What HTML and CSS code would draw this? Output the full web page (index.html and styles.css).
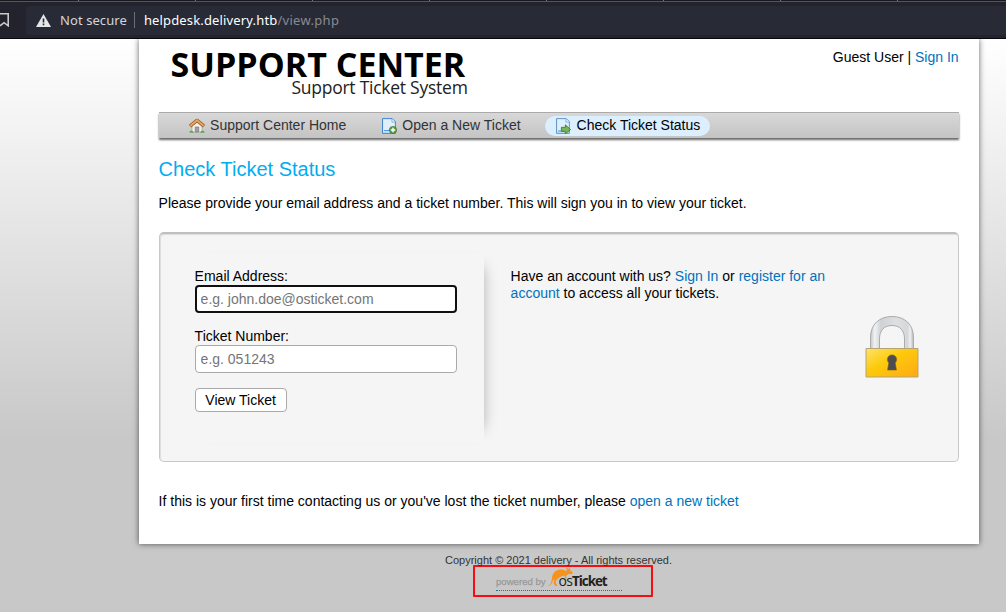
FILE: index.html
```html
<!DOCTYPE html>
<html lang="en">
<head>
<meta charset="utf-8">
<title>Support Center</title>
<link rel="stylesheet" href="styles.css">
</head>
<body>
<div class="browser">
  <div class="tabs"><i></i><i></i><i></i><i></i><i></i><i></i><i></i><i></i></div>
  <div class="toolbar">
    <svg class="bookmark" width="12" height="14" viewBox="0 0 12 14"><path d="M0 .8H8.2V12.8L4.1 9.700 0 12.8" fill="none" stroke="#c9cacd" stroke-width="1.6"/></svg>
    <div class="address">
      <svg class="warn" width="15" height="13" viewBox="0 0 15 13"><path d="M7.5 0 15 13H0Z" fill="#e6e7e9"/><path d="M6.7 4.5h1.6v4H6.7zM6.7 9.6h1.6v1.6H6.7z" fill="#282a36"/></svg>
      <span class="secure">Not secure</span>
      <span class="host">helpdesk.delivery.htb</span><span class="path">/view.php</span>
    </div>
  </div>
</div>
<div class="page">
  <main class="container">
    <header class="header">
      <div class="logo"><div class="logo-title">SUPPORT CENTER</div><div class="logo-sub">Support Ticket System</div></div>
      <div class="user">Guest User | <a>Sign In</a></div>
    </header>
    <nav class="nav">
      <a class="nav-item home">
        <svg width="16" height="16" viewBox="0 0 16 16"><path d="M3 8 8 3.5 13 8v6H3Z" fill="#f1efeb" stroke="#aaa49b" stroke-width=".7"/><path d="M6.3 9h3.4v5H6.3Z" fill="#a1a1a1" stroke="#777" stroke-width=".7"/><path d="M1 8.2 8 2.4l7 5.8" fill="none" stroke="#9b5822" stroke-width="3.4" stroke-linejoin="round"/><path d="M1.2 7.900 8 2.300l6.8 5.600" fill="none" stroke="#e3a763" stroke-width="2"/><path d="M.4 14.8c0-2.5 2-3 3.2-1.8l1.5 1.8ZM11 14.8l1.2-1.8c1.3-1.2 3.4-.7 3.4 1.8Z" fill="#5caa58"/></svg>
        Support Center Home</a>
      <a class="nav-item new">
        <svg width="16" height="16" viewBox="0 0 16 16"><path d="M1.5.6h9.8l3.1 3.1v11.7H1.5Z" fill="#c6e1fa" stroke="#4685c8"/><path d="M2.5 1.6h8v3h3v5L2.5 13Z" fill="#e0effc"/><path d="M11 1v3h3" fill="#fff" stroke="#76a6d6" stroke-width=".8"/><path d="M3 12.5h7" stroke="#4b9be8"/><circle cx="12" cy="12" r="3.6" fill="#62a047" stroke="#397026" stroke-width=".7"/><path d="M12 9.8v4.4M9.8 12h4.4" stroke="#fff" stroke-width="1.4"/></svg>
        Open a New Ticket</a>
      <a class="nav-item status">
        <svg width="16" height="16" viewBox="0 0 16 16"><path d="M1.5.6h9.8l3.1 3.1v11.7H1.5Z" fill="#c6e1fa" stroke="#6a98c8"/><path d="M2.5 1.6h8v3h3v5L2.5 13Z" fill="#e0effc"/><path d="M11 1v3h3" fill="#fff" stroke="#76a6d6" stroke-width=".8"/><path d="M3 13h5" stroke="#4b9be8"/><path d="M6.4 9.3h4V6.8l5.2 4.8-5.2 4.2v-2.4h-4Z" fill="#77b656" stroke="#3f7f2c" stroke-width=".9"/></svg>
        Check Ticket Status</a>
    </nav>
    <h1 class="title">Check Ticket Status</h1>
    <p class="intro">Please provide your email address and a ticket number. This will sign you in to view your ticket.</p>
    <form class="panel">
      <div class="login">
        <label for="email">Email Address:</label>
        <input id="email" class="focused" type="text" placeholder="e.g. john.doe@osticket.com">
        <label class="second" for="number">Ticket Number:</label>
        <input id="number" type="text" placeholder="e.g. 051243">
        <button type="button">View Ticket</button>
      </div>
      <div class="account">
        <p>Have an account with us? <a>Sign In</a> or <a>register for an account</a> to access all your tickets.</p>
        <svg class="lock" width="56" height="64" viewBox="0 0 56 64">
          <defs>
            <linearGradient id="gold" x1="0" y1="0" x2="1" y2="1"><stop offset="0" stop-color="#ffe268"/><stop offset=".42" stop-color="#fdca0b"/><stop offset="1" stop-color="#ffa915"/></linearGradient>
            <linearGradient id="steel" x1="0" y1="0" x2="1" y2="0"><stop offset="0" stop-color="#c4c6c8"/><stop offset=".1" stop-color="#f1f2f3"/><stop offset=".24" stop-color="#cfd1d3"/><stop offset=".6" stop-color="#dddfe0"/><stop offset=".87" stop-color="#d5d7d9"/><stop offset=".92" stop-color="#f0f1f2"/><stop offset="1" stop-color="#b5b7b9"/></linearGradient>
          </defs>
          <path d="M6.5 34V23C6.500 9 15.500 1.500 28 1.500S49.500 9 49.500 23V34H40.500V24C40.500 15.500 36 10.500 28 10.500S15.500 15.500 15.500 24V34Z" fill="url(#steel)" stroke="#a9abad"/>
          <path d="M2 33.500H54V62H2Z" fill="url(#gold)" stroke="#b5a574"/>
          <path d="M24.800 47.800a4.600 4.600 0 1 1 6.400 0L32.400 55H23.600Z" fill="#4d4c50" stroke="#77601c" stroke-width=".6"/>
        </svg>
      </div>
    </form>
    <p class="first-time">If this is your first time contacting us or you've lost the ticket number, please <a>open a new ticket</a></p>
  </main>
  <footer class="footer">
    <p>Copyright © 2021 delivery - All rights reserved.</p>
    <div class="marker"><div class="powered">
      <span class="by">powered by</span>
      <svg class="roo" width="27" height="20" viewBox="0 0 27 20"><path d="M0 19C4 18.500 4.500 15 5 11 5.500 4.500 10.500 2.500 14 2.500 17 2.500 18 4 20 4L19 .2 21.500 2 22.500 .3 23.500 3.500 26 5.500 25 7 21.500 7 19 9 19.500 12 18.300 11.500 17.300 8.500 14 9.500 11 11.500 9.500 13 8.500 15.500 10.500 19 8.500 19 6.500 16.500 7.500 13 6.200 12.500C5.500 16 3.500 19.500 0 19Z" fill="#f7931c"/></svg>
      <span class="os">os</span><span class="ticket">Ticket</span>
    </div></div>
  </footer>
</div>
</body>
</html>
```
FILE: styles.css
```css
* { box-sizing: border-box; }
body { margin: 0; height: 612px; overflow: hidden; background: #c8c8c8; color: #000; font: 14px/17px "Liberation Sans", Arial, sans-serif; }
p, h1 { margin: 0; }
a { color: #0072bc; text-decoration: none; }
svg { display: block; flex: none; }

.browser { height: 39px; background: #22232c; border-bottom: 1px solid #07070d; }
.tabs { height: 2px; display: flex; gap: 116px; padding-left: 78px; overflow: hidden; background: #18191f; border-bottom: 1px solid #55565c; }
.tabs i { width: 1px; height: 1px; flex: none; background: #77787d; }
.toolbar { height: 36px; display: flex; align-items: center; }
.bookmark { margin-right: 14px; }
.address { flex: 1; height: 29px; display: flex; align-items: center; padding-left: 10px; background: #282a36; border-radius: 4px 0 0 4px; font: 13px/20px "Noto Sans", sans-serif; color: #d5d6da; }
.secure { margin-left: 9px; padding-right: 7px; border-right: 1px solid #6c6d75; line-height: 16px; letter-spacing: .08px; }
.host { margin-left: 9px; color: #fff; letter-spacing: .15px; }
.path { color: #888a92; letter-spacing: .3px; }

.page { height: 573px; background: linear-gradient(#fff, #c8c8c8 400px) no-repeat; background-color: #c8c8c8; }
.container { width: 840px; height: 505px; margin-left: 138.6px; padding: 0 20px; background: #fff; box-shadow: 0 0 6px rgba(0,0,0,.6); clip-path: inset(0 -10px -10px); }
.header { height: 73px; display: flex; justify-content: space-between; padding: 8px 0 0 12px; }
.logo { width: 297px; font-family: "Open Sans", "Noto Sans", sans-serif; }
.logo-title { font-size: 34px; line-height: 34px; font-weight: 700; white-space: nowrap; }
.logo-sub { font-size: 17.5px; line-height: 18px; margin-top: -3px; text-align: right; white-space: nowrap; letter-spacing: -.25px; color: #222; }
.user { margin-top: 2px; }
.nav { height: 26px; display: flex; align-items: center; padding-left: 20px; background: linear-gradient(#d8d8d8, #c4c4c4); border-top: 1px solid #aaa; box-shadow: 0 2px 2px rgba(0,0,0,.6); }
.nav-item { height: 20px; display: flex; align-items: center; gap: 5.500px; padding: 0 10px; border-radius: 10px; color: #333; white-space: nowrap; }
.new { margin-left: 14.5px; }
.status { margin-left: 14.500px; background: #dbefff; color: #000; }
.title { margin-top: 19px; font-size: 20px; line-height: 24px; font-weight: 400; color: #00aeef; }
.intro { margin-top: 14px; }
.panel { height: 230px; margin-top: 20px; display: flex; padding: 19px 20px; background: #f5f5f5; border: 1px solid #c8c8c8; border-top: 2px solid #bfbfbf; border-radius: 5px; box-shadow: inset 1px 1px 1px #ddd; }
.login { width: 304px; height: 190px; padding: 15px; background: #f5f5f5; box-shadow: 12px 0 15px -15px rgba(0,0,0,.4); }
.login label { display: block; }
.login input { display: block; width: 262px; height: 28px; padding: 0 5px; font: inherit; background: #fff; border: 1px solid #aaa; border-radius: 4px; outline: 0; }
.login input::placeholder { color: #757575; opacity: 1; }
.login .focused { border: 2px solid #101010; padding: 0 4px; }
.login .second { margin-top: 15px; }
.login button { display: block; width: 92px; height: 24px; margin-top: 15px; padding: 0; font: inherit; color: #000; background: #fff; border: 1px solid #aaa; border-radius: 4px; }
.account { flex: 1; padding: 15px 17.4px 0 27px; display: flex; flex-direction: column; }
.account p { width: 330px; }
.lock { align-self: flex-end; margin-top: 13px; }
.first-time { margin-top: 31px; }

.footer { margin-left: 138.5px; width: 840px; padding-top: 10px; font-size: 11px; line-height: 13px; text-align: center; color: #333; }
.marker { width: 180px; height: 32px; margin: -2px 0 0 334.5px; padding: 0 21px; border: 2px solid #f40d12; border-radius: 1px; }
.powered { width: 126px; height: 24px; display: flex; align-items: flex-end; border-bottom: 1px dotted #1675a5; white-space: nowrap; }
.by { font-size: 9.6px; font-weight: 400; line-height: 13px; color: #999; padding-bottom: 2px; -webkit-text-stroke: .25px #999; }
.roo { margin-left: 1px; margin-bottom: 3px; }
.os, .ticket { font: 14px/16px "Open Sans", sans-serif; letter-spacing: -.8px; padding-bottom: 1px; color: #222; }
.os { margin-left: -15px; }
.ticket { font-weight: 700; font-size: 13.5px; letter-spacing: -1.1px; }
```
